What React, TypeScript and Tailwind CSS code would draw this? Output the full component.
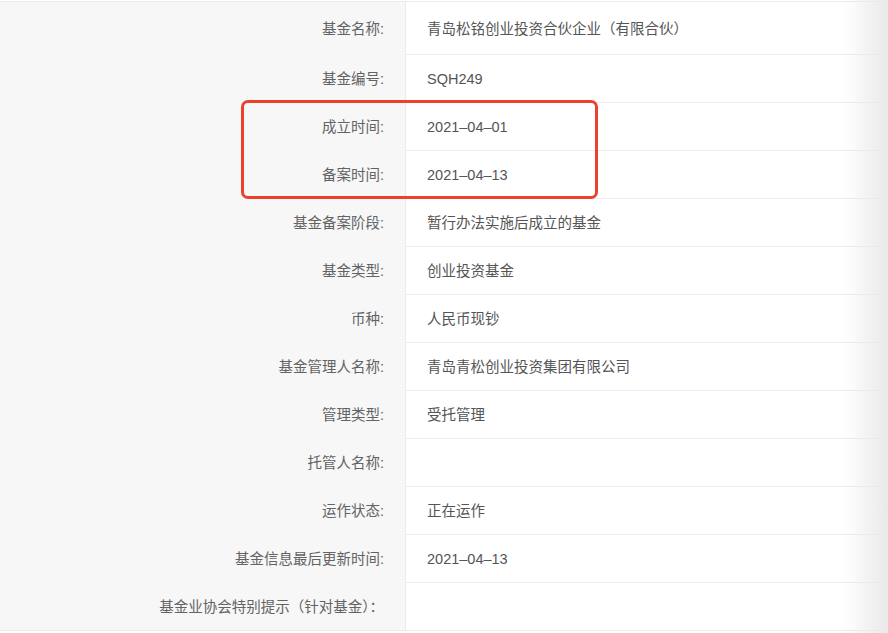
import React from "react";

interface Row {
  label: string;
  value: string;
}

const rows: Row[] = [
  { label: "基金名称:", value: "青岛松铭创业投资合伙企业（有限合伙）" },
  { label: "基金编号:", value: "SQH249" },
  { label: "成立时间:", value: "2021–04–01" },
  { label: "备案时间:", value: "2021–04–13" },
  { label: "基金备案阶段:", value: "暂行办法实施后成立的基金" },
  { label: "基金类型:", value: "创业投资基金" },
  { label: "币种:", value: "人民币现钞" },
  { label: "基金管理人名称:", value: "青岛青松创业投资集团有限公司" },
  { label: "管理类型:", value: "受托管理" },
  { label: "托管人名称:", value: "" },
  { label: "运作状态:", value: "正在运作" },
  { label: "基金信息最后更新时间:", value: "2021–04–13" },
  { label: "基金业协会特别提示（针对基金）：", value: "" },
];

export default function App() {
  return (
    <div
      className="relative w-[888px] h-[633px] overflow-hidden bg-white text-[14.5px]"
      style={{ fontFamily: '"Liberation Sans", "Noto Sans CJK SC", sans-serif' }}
    >
      <div className="pt-px">
        <div className="flex flex-col border-t border-[#ececec]">
          {rows.map((row, i) => (
            <div
              key={row.label}
              className={`flex border-b border-[#ececec] ${i === 0 ? "h-[53px] pt-[3px]" : "h-[48px] pt-[2px]"}`}
            >
              {/* label cell */}
              <div className="w-[406px] shrink-0 flex items-center justify-end pr-[21px] bg-[#f7f7f7] border-r border-[#ececec] text-[#636363] -mt-[3px] pt-[3px]">
                {row.label}
              </div>
              {/* value cell */}
              <div className="flex-1 flex items-center pl-[21px] text-[#555]">
                {row.value}
              </div>
            </div>
          ))}
        </div>
      </div>

      {/* red highlight box */}
      <div className="absolute left-[241px] top-[100px] w-[357px] h-[99px] border-[3px] border-[#e8432f] rounded-[7px]" />

      {/* right edge shade */}
      <div className="absolute right-0 top-0 bottom-0 w-[44px] bg-gradient-to-r from-white/0 to-[#e9e9e9]" />
    </div>
  );
}
